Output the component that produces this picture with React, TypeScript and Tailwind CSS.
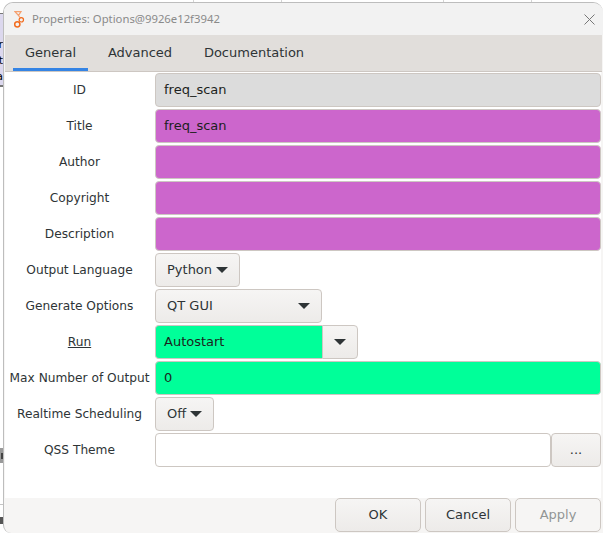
const font = "font-['DejaVu_Sans',sans-serif]";

function Caret() {
  return (
    <svg width="12" height="6" viewBox="0 0 12 6" className="shrink-0">
      <path d="M0 0h12L6 6z" fill="#2e3436" />
    </svg>
  );
}

function Row({ label, children, underline }: { label: string; children: React.ReactNode; underline?: boolean }) {
  return (
    <div className="flex h-[34px] items-center">
      <div className={`w-[150px] shrink-0 pr-px text-center text-[12.2px] text-[#2e3436] ${underline ? "underline" : ""}`}>{label}</div>
      <div className="flex h-full flex-1 items-stretch">{children}</div>
    </div>
  );
}

function Field({ value, color }: { value?: string; color: string }) {
  return (
    <div className={`flex flex-1 items-center rounded-[4px] border border-[#cdc7c2] px-2 text-[13px] text-[#1c1f20] ${color}`}>
      {value}
    </div>
  );
}

function Combo({ value, width }: { value: string; width: string }) {
  return (
    <div className={`flex items-center justify-between rounded-[4px] border border-[#cdc7c2] bg-gradient-to-b from-[#f6f5f4] to-[#edebe9] pl-[11px] pr-[11px] text-[13px] text-[#2e3436] ${width}`}>
      <span>{value}</span>
      <Caret />
    </div>
  );
}

function FootButton({ label, disabled }: { label: string; disabled?: boolean }) {
  return (
    <div
      className={`flex h-[34px] w-[86px] items-center justify-center rounded-[5px] border border-[#cdc7c2] pb-px text-[13px] ${
        disabled ? "bg-[#f6f5f4] text-[#929595]" : "bg-gradient-to-b from-[#f6f5f4] to-[#edebe9] text-[#2e3436]"
      }`}
    >
      {label}
    </div>
  );
}

// slivers of the windows behind the dialog
function BehindLeft() {
  return (
    <div className="flex w-[3px] shrink-0 flex-col">
      <div className="h-[13px] bg-white" />
      <div className="h-px bg-[#777777]" />
      <div className="flex h-[71px] flex-col items-end overflow-hidden bg-[#dcd8ee] pt-[23px] text-[11px] leading-[16px] text-black">
        <span>r</span>
        <span>t</span>
        <span>a</span>
      </div>
      <div className="h-[2px] bg-[#777777]" />
      <div className="h-[361px] bg-white" />
      <div className="flex h-[15px] items-center justify-end bg-[#9a9a9a]">
        <div className="h-[6px] w-[2px] bg-[#444444]" />
      </div>
      <div className="h-[41px] bg-white" />
      <div className="h-px bg-[#c4c4c4]" />
      <div className="h-[12px] bg-white" />
      <div className="h-[7px] bg-[#555555]" />
      <div className="flex-1 bg-white" />
    </div>
  );
}

export default function App() {
  return (
    <div className={`flex h-[533px] w-[603px] overflow-hidden bg-white ${font}`}>
      <BehindLeft />
      <div className="flex flex-1 flex-col">
        <div className="flex h-[2px] shrink-0 bg-white">
          <div className="ml-[190px] w-px bg-[#d4d4d4]" />
          <div className="ml-[87px] w-px bg-[#d4d4d4]" />
          <div className="ml-[161px] w-px bg-[#d4d4d4]" />
          <div className="ml-[87px] w-px bg-[#d4d4d4]" />
        </div>
        <div className="flex h-[531px] flex-col overflow-hidden rounded-t-[10px] rounded-bl-[8px] border-l border-t border-[#bdbdbd] bg-[#f6f5f4]">
          <div className="flex h-[32px] shrink-0 items-center justify-between bg-[#f2f2f2] pl-[10px] pr-[8px]">
            <div className="flex items-center gap-[7px]">
              <svg width="11" height="17" viewBox="0 0 11 17" fill="none" stroke="#f26b1d" strokeWidth="1.2">
                <path d="M1 .7h6L4.5 4.5z" stroke="#f5a070" />
                <path d="M4.5 4.5L6.5 7" stroke="#f5a070" />
                <circle cx="7.3" cy="8.8" r="2.2" />
                <circle cx="3.3" cy="13.3" r="2.6" strokeWidth="1.5" />
              </svg>
              <span className="font-['Noto_Sans',sans-serif] text-[11.3px] text-[#8a8a8a]">Properties: Options@9926e12f3942</span>
            </div>
            <svg width="11" height="11" viewBox="0 0 11 11" stroke="#777" strokeWidth="1">
              <path d="M.5.5l10 10M10.5.5l-10 10" />
            </svg>
          </div>

          <div className="mx-px flex h-[37px] shrink-0 items-stretch border-b border-[#cdc7c2] bg-[#e1dedb] pl-2 pr-px text-[13px] text-[#2e3436]">
            <div className="flex w-[75px] items-center justify-center border-b-[3px] border-[#3584e4] pt-[3px]">General</div>
            <div className="flex w-[104px] items-center justify-center pb-px">Advanced</div>
            <div className="flex w-[124px] items-center justify-center pb-px">Documentation</div>
          </div>

          <div className="ml-px mr-[2px] flex h-[426px] shrink-0 flex-col gap-[2px] bg-white pt-px">
            <Row label="ID"><Field value="freq_scan" color="bg-[#dcdcdc]" /></Row>
            <Row label="Title"><Field value="freq_scan" color="bg-[#cc66cc]" /></Row>
            <Row label="Author"><Field color="bg-[#cc66cc]" /></Row>
            <Row label="Copyright"><Field color="bg-[#cc66cc]" /></Row>
            <Row label="Description"><Field color="bg-[#cc66cc]" /></Row>
            <Row label="Output Language"><Combo value="Python" width="w-[85px]" /></Row>
            <Row label="Generate Options"><Combo value="QT GUI" width="w-[167px]" /></Row>
            <Row label="Run" underline>
              <div className="flex w-[167px] items-center rounded-l-[4px] border border-r-0 border-[#cdc7c2] bg-[#00ff99] px-2 text-[13px] text-[#1c1f20]">Autostart</div>
              <div className="flex w-[36px] items-center justify-center rounded-r-[4px] border border-[#cdc7c2] bg-gradient-to-b from-[#f6f5f4] to-[#edebe9]">
                <Caret />
              </div>
            </Row>
            <Row label="Max Number of Output"><Field value="0" color="bg-[#00ff99]" /></Row>
            <Row label="Realtime Scheduling"><Combo value="Off" width="w-[59px]" /></Row>
            <Row label="QSS Theme">
              <Field color="bg-white" />
              <div className="flex w-[50px] items-center justify-center rounded-[4px] border border-[#cdc7c2] bg-gradient-to-b from-[#f6f5f4] to-[#edebe9] text-[13px] text-[#2e3436]">...</div>
            </Row>
          </div>

          <div className="flex flex-1 items-start justify-end gap-[4px] pr-[2px]">
            <FootButton label="OK" />
            <FootButton label="Cancel" />
            <FootButton label="Apply" disabled />
          </div>
        </div>
      </div>
    </div>
  );
}
